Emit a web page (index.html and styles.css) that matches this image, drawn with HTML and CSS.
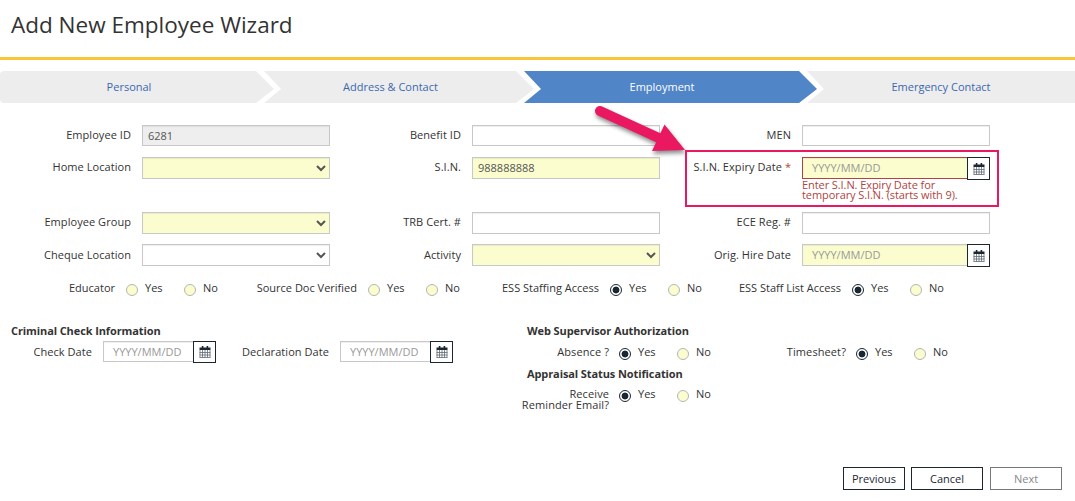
FILE: index.html
```html
<!DOCTYPE html>
<html lang="en">
<head>
    <meta charset="UTF-8">
    <meta name="viewport" content="width=device-width, initial-scale=1.0">
    <title>Add New Employee Wizard</title>
    <link rel="stylesheet" href="styles.css">
</head>
<body>

<!-- Calendar icon shared by all date fields -->
<svg class="symbols" width="0" height="0">
    <symbol id="calendar" viewBox="0 0 12 12">
        <path d="M.5 1.5h11V4H.5z" fill="#1a2733"/>
        <path d="M2.8 0h1.6v2.5H2.8zM7.6 0h1.6v2.5H7.6z" fill="#1a2733"/>
        <path d="M1 4v7.5M3.5 4v7.5M6 4v7.5M8.5 4v7.5M11 4v7.5M.5 6.5h11M.5 9h11M.5 11.5h11" stroke="#5f6a74" stroke-width=".8" fill="none"/>
    </symbol>
</svg>

<header class="page-header">
    <h1>Add New Employee Wizard</h1>
</header>

<nav class="steps">
    <a class="step step-first">Personal</a>
    <a class="step step-second">Address &amp; Contact</a>
    <a class="step step-active">Employment</a>
    <a class="step step-last">Emergency Contact</a>
</nav>

<form>
    <!-- Main fields -->
    <div class="fields">
        <div class="field">
            <label for="employee-id">Employee ID</label>
            <input type="text" id="employee-id" class="short" value="6281" disabled>
        </div>
        <div class="field">
            <label for="benefit-id">Benefit ID</label>
            <input type="text" id="benefit-id" class="short">
        </div>
        <div class="field">
            <label for="men">MEN</label>
            <input type="text" id="men" class="short">
        </div>

        <div class="field">
            <label for="home-location">Home Location</label>
            <select id="home-location" class="required"><option></option></select>
        </div>
        <div class="field">
            <label for="sin">S.I.N.</label>
            <input type="text" id="sin" class="required" value="988888888">
        </div>
        <div class="field highlighted">
            <label for="sin-expiry">S.I.N. Expiry Date <span class="star">*</span></label>
            <div class="control">
                <div class="date">
                    <input type="text" id="sin-expiry" class="required invalid" placeholder="YYYY/MM/DD">
                    <button type="button" class="date-btn"><svg><use href="#calendar"/></svg></button>
                </div>
                <p class="error">Enter S.I.N. Expiry Date for<br>temporary S.I.N. (starts with 9).</p>
            </div>
            <svg class="arrow" width="110" height="64" viewBox="0 0 110 64">
                <path d="M11 11L72 39" stroke="#ea1860" stroke-width="10" stroke-linecap="round"/>
                <path d="M75.5 24.5L96 50 63 51z" fill="#ea1860"/>
            </svg>
        </div>

        <div class="field">
            <label for="employee-group">Employee Group</label>
            <select id="employee-group" class="required"><option></option></select>
        </div>
        <div class="field">
            <label for="trb-cert">TRB Cert. #</label>
            <input type="text" id="trb-cert">
        </div>
        <div class="field">
            <label for="ece-reg">ECE Reg. #</label>
            <input type="text" id="ece-reg">
        </div>

        <div class="field field-last">
            <label for="cheque-location">Cheque Location</label>
            <select id="cheque-location"><option></option></select>
        </div>
        <div class="field field-last">
            <label for="activity">Activity</label>
            <select id="activity" class="required"><option></option></select>
        </div>
        <div class="field field-last">
            <label for="hire-date">Orig. Hire Date</label>
            <div class="date">
                <input type="text" id="hire-date" class="required" placeholder="YYYY/MM/DD">
                <button type="button" class="date-btn"><svg><use href="#calendar"/></svg></button>
            </div>
        </div>
    </div>

    <!-- Yes / No flags -->
    <div class="flags">
        <div class="flag">
            <span class="flag-label">Educator</span>
            <label class="option"><input type="radio" name="educator">Yes</label>
            <label class="option"><input type="radio" name="educator">No</label>
        </div>
        <div class="flag">
            <span class="flag-label">Source Doc Verified</span>
            <label class="option"><input type="radio" name="source-doc">Yes</label>
            <label class="option"><input type="radio" name="source-doc">No</label>
        </div>
        <div class="flag">
            <span class="flag-label">ESS Staffing Access</span>
            <label class="option"><input type="radio" name="ess-staffing" checked>Yes</label>
            <label class="option"><input type="radio" name="ess-staffing">No</label>
        </div>
        <div class="flag">
            <span class="flag-label">ESS Staff List Access</span>
            <label class="option"><input type="radio" name="ess-list" checked>Yes</label>
            <label class="option"><input type="radio" name="ess-list">No</label>
        </div>
    </div>

    <div class="sections">
        <section>
            <h2>Criminal Check Information</h2>
            <div class="check-dates">
                <div class="check">
                    <label for="check-date">Check Date</label>
                    <div class="date">
                        <input type="text" id="check-date" class="short" placeholder="YYYY/MM/DD">
                        <button type="button" class="date-btn"><svg><use href="#calendar"/></svg></button>
                    </div>
                </div>
                <div class="check check-wide">
                    <label for="declaration-date">Declaration Date</label>
                    <div class="date">
                        <input type="text" id="declaration-date" class="short" placeholder="YYYY/MM/DD">
                        <button type="button" class="date-btn"><svg><use href="#calendar"/></svg></button>
                    </div>
                </div>
            </div>
        </section>

        <section>
            <h2>Web Supervisor Authorization</h2>
            <div class="flags">
                <div class="flag">
                    <span class="flag-label">Absence ?</span>
                    <label class="option"><input type="radio" name="absence" checked>Yes</label>
                    <label class="option"><input type="radio" name="absence">No</label>
                </div>
                <div class="flag">
                    <span class="flag-label">Timesheet?</span>
                    <label class="option"><input type="radio" name="timesheet" checked>Yes</label>
                    <label class="option"><input type="radio" name="timesheet">No</label>
                </div>
            </div>
            <h2>Appraisal Status Notification</h2>
            <div class="flags flags-reminder">
                <div class="flag">
                    <span class="flag-label">Receive<br>Reminder Email?</span>
                    <label class="option"><input type="radio" name="reminder" checked>Yes</label>
                    <label class="option"><input type="radio" name="reminder">No</label>
                </div>
            </div>
        </section>
    </div>

    <div class="buttons">
        <button type="button" class="btn btn-prev">Previous</button>
        <button type="button" class="btn">Cancel</button>
        <button type="button" class="btn btn-next" disabled>Next</button>
    </div>
</form>

</body>
</html>
```
FILE: styles.css
```css
* {
    box-sizing: border-box;
}

body {
    margin: 0;
    height: 501px;
    overflow: hidden;
    background-color: #fff;
    color: #333;
    font-family: "Open Sans", sans-serif;
    font-size: 11px;
    line-height: 11px;
}

.symbols {
    display: none;
}

.page-header {
    height: 60px;
    padding: 8px 11px 0;
    border-bottom: 3px solid #fac537;
}

h1 {
    margin: 0;
    font-size: 22.5px;
    font-weight: 400;
    line-height: 33px;
}

/* Wizard steps */
.steps {
    display: flex;
    height: 32px;
    margin-top: 11px;
}

.step {
    padding-right: 17px;
    margin-left: -10px;
    background-color: #ededed;
    color: #3a69b0;
    font-size: 11px;
    line-height: 32px;
    text-align: center;
    clip-path: polygon(0 0, calc(100% - 18px) 0, 100% 18px, calc(100% - 18px) 100%, 0 100%, 17px 18px);
}

.step-first {
    width: 274px;
    padding-right: 16px;
    margin-left: 0;
    border-radius: 4px 0 0 4px;
    clip-path: polygon(0 0, calc(100% - 18px) 0, 100% 18px, calc(100% - 18px) 100%, 0 100%);
}

.step-second {
    width: 270px;
}

.step-active {
    width: 293px;
    background-color: #5085c8;
    color: #fff;
    font-weight: 500;
}

.step-last {
    flex: 1;
    padding-right: 0;
    clip-path: polygon(0 0, 100% 0, 100% 100%, 0 100%, 17px 18px);
}

/* Fields */
.fields {
    display: grid;
    grid-template-columns: repeat(3, 330px);
    grid-template-rows: 32px 55px 32px 22px;
    margin-top: 22px;
}

.field {
    display: flex;
    align-items: flex-start;
}

.field > label {
    width: 131px;
    margin-right: 11px;
    padding-top: 4px;
    font-weight: 500;
    letter-spacing: 0.06px;
    text-align: right;
}

.field-last > label {
    padding-top: 5px;
}

input[type="text"],
select {
    width: 188px;
    height: 22px;
    margin: 0;
    padding: 0 5px;
    border: 1px solid #c8c8c8;
    border-radius: 0;
    background-color: #fff;
    box-shadow: inset 0 1px 1px rgba(0, 0, 0, 0.07);
    color: #555;
    font-family: inherit;
    font-size: 11px;
}

input[type="text"].required {
    padding-bottom: 1px;
}

input[type="text"].short {
    height: 21px;
}

input[type="text"]:disabled {
    background-color: #eee;
}

input[type="text"].required,
select.required {
    background-color: #fbfdcf;
}

input[type="text"].invalid {
    border-color: #b04441;
}

input::placeholder {
    color: #999;
}

.date {
    display: flex;
    width: 188px;
}

.date input[type="text"] {
    width: 165px;
    padding-left: 9px;
    border-right: 0;
}

.date-btn {
    display: flex;
    align-items: center;
    justify-content: center;
    width: 23px;
    height: 23px;
    padding: 0;
    border: 1px solid #1a2733;
    background-color: #fff;
}

.date-btn svg {
    width: 12px;
    height: 12px;
}

.check .date-btn {
    height: 22px;
}

.star,
.error {
    color: #b04441;
}

.error {
    margin: 0;
    line-height: 10px;
    letter-spacing: -0.08px;
}

/* Highlighted field with the arrow pointing to it */
.highlighted {
    position: relative;
}

.highlighted::after {
    content: "";
    position: absolute;
    left: 25px;
    top: -7px;
    width: 314px;
    height: 57px;
    box-sizing: border-box;
    border: 2px solid #ea1860;
}

.arrow {
    position: absolute;
    left: -71px;
    top: -57px;
    overflow: visible;
    filter: drop-shadow(1px 3px 2px rgba(0, 0, 0, 0.45));
}

/* Yes / No flags */
.flags {
    display: flex;
    margin-top: 16px;
}

.flag {
    display: flex;
    width: 242px;
}

.flag-label {
    width: 115px;
    margin-right: 11px;
    font-weight: 500;
    text-align: right;
}

.option {
    display: flex;
    width: 58px;
}

.option input {
    appearance: none;
    flex: none;
    width: 12px;
    height: 12px;
    margin: 2px 7px 0 0;
    border: 1px solid #b5b5b5;
    border-radius: 50%;
    background-color: #fbfdcf;
}

.option input:checked {
    border-color: #1a2733;
    background: radial-gradient(circle, #1a2733 3px, #fff 3.8px);
}

/* Lower sections */
.sections {
    display: flex;
    margin-top: 29px;
}

section {
    width: 516px;
    padding-left: 11px;
}

h2 {
    margin: 0;
    font-size: 11px;
    font-weight: 700;
    line-height: 11px;
    letter-spacing: -0.1px;
}

.check-dates {
    display: flex;
    margin-top: 5px;
}

.check {
    display: flex;
    width: 205px;
}

.check > label {
    width: 81px;
    margin-right: 11px;
    padding-top: 5px;
    font-weight: 500;
    letter-spacing: 0.06px;
    text-align: right;
    white-space: nowrap;
}

.check-wide {
    width: 237px;
}

.check-wide > label {
    width: 113px;
}

.check .date {
    width: 113px;
}

.check .date input[type="text"] {
    width: 90px;
}

section .flags {
    height: 22px;
    margin-top: 10px;
}

section .flags-reminder {
    margin-top: 9px;
}

section .flag {
    width: 237px;
}

/* labels in this block reach a little left of the headings */
section:last-child .flags {
    margin-left: -11px;
}

section .flag-label {
    width: 93px;
    margin-right: 10px;
    letter-spacing: 0.1px;
}

/* Buttons */
.buttons {
    display: flex;
    margin: 57px 0 0 843px;
}

.btn {
    width: 72px;
    height: 23px;
    padding: 0 0 1px;
    margin-right: 7px;
    border: 1px solid #1a2733;
    background-color: #fff;
    color: #1a2733;
    font-family: inherit;
    font-size: 11px;
}

.btn-prev {
    width: 62px;
    margin-right: 6px;
}

.btn-next {
    margin-right: 0;
    border-color: #76797c;
    color: #85898c;
}
```
